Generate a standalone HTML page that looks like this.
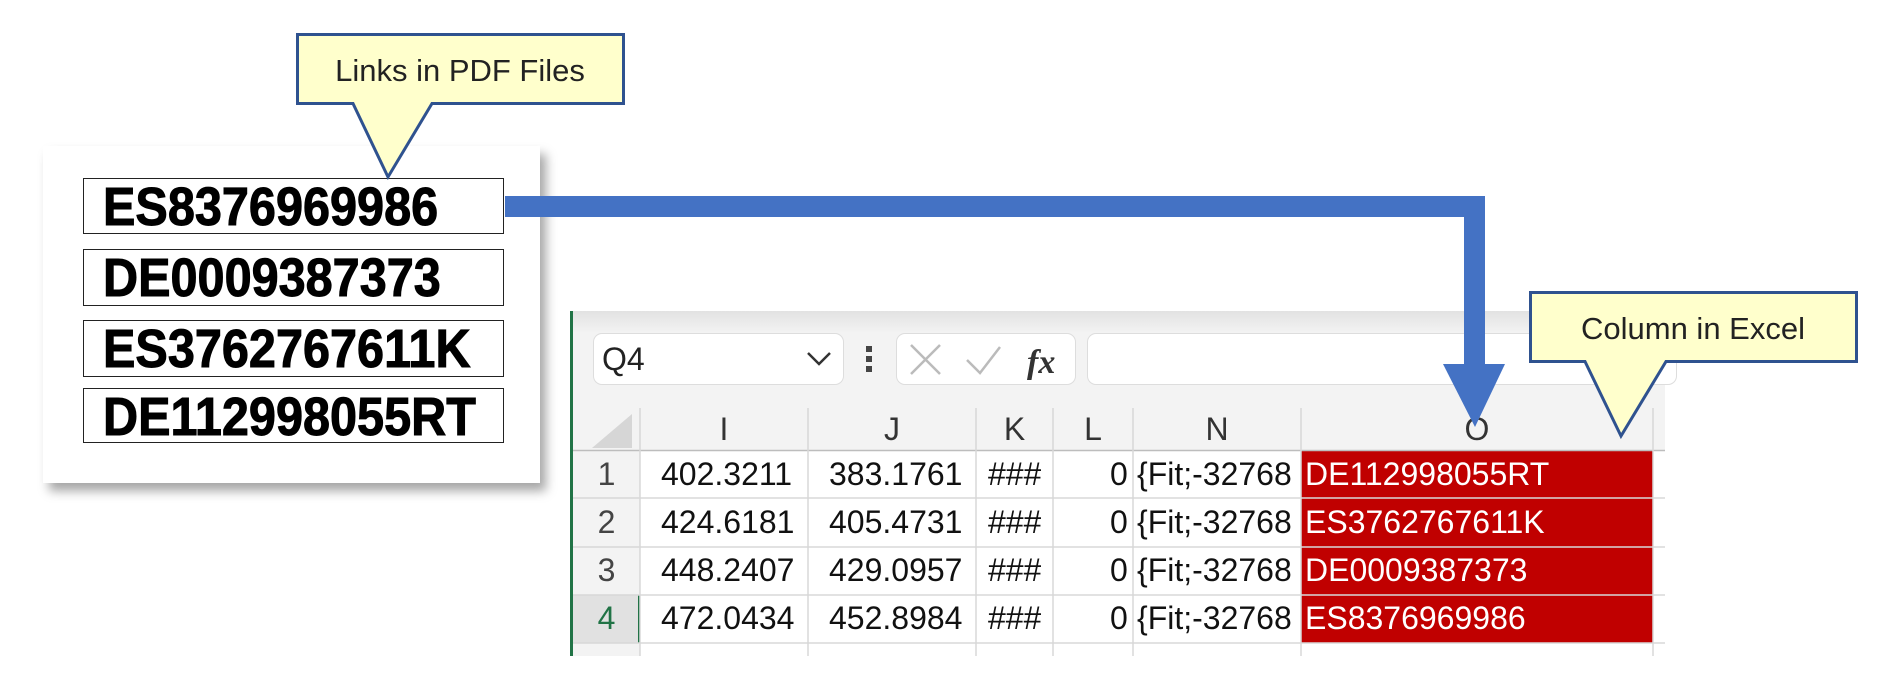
<!DOCTYPE html>
<html><head><meta charset="utf-8"><style>
*{margin:0;padding:0;box-sizing:border-box}
body{width:1895px;height:695px;background:#fff;position:relative;overflow:hidden;font-family:"Liberation Sans",sans-serif}
.abs{position:absolute}
.panel{left:43px;top:146px;width:497px;height:337px;background:#fff;box-shadow:6px 8px 10px rgba(0,0,0,.35)}
.pb{position:absolute;left:83px;width:421px;border:1.5px solid #222;background:#fff;color:#000;overflow:hidden}
.pb span{position:absolute;left:19px;top:1px;font-weight:bold;font-size:54px;line-height:54px;transform:scaleX(0.9);transform-origin:0 0;white-space:nowrap;-webkit-text-stroke:1px #000}
.cell{position:absolute;font-size:32px;color:#111;line-height:47px;white-space:nowrap;overflow:hidden}
</style></head><body>
<div class="abs panel"></div>
<div class="pb" style="top:178px;height:56px"><span>ES8376969986</span></div>
<div class="pb" style="top:249px;height:57px"><span>DE0009387373</span></div>
<div class="pb" style="top:320px;height:57px"><span>ES3762767611K</span></div>
<div class="pb" style="top:388px;height:55px"><span>DE112998055RT</span></div>

<div class="abs" style="left:570px;top:311px;width:1095px;height:345px;background:#f3f3f3;border-left:3px solid #217346">
 <div class="abs" style="left:0;top:0;width:1092px;height:22px;background:linear-gradient(#e2e2e2,#f3f3f3)"></div>
</div>
<div class="abs" style="left:593px;top:333px;width:251px;height:52px;background:#fff;border:1px solid #ddd;border-radius:9px;font-size:32px;line-height:50px;padding-left:8px;color:#222">Q4</div>
<svg class="abs" style="left:805px;top:349px" width="30" height="20"><path d="M3 4 L14 15 L25 4" fill="none" stroke="#333" stroke-width="2.5"/></svg>
<div class="abs" style="left:866px;top:346px;width:6px;height:6px;background:#444"></div>
<div class="abs" style="left:866px;top:356px;width:6px;height:6px;background:#444"></div>
<div class="abs" style="left:866px;top:366px;width:6px;height:6px;background:#444"></div>
<div class="abs" style="left:896px;top:333px;width:180px;height:52px;background:#fff;border:1px solid #ddd;border-radius:9px"></div>
<svg class="abs" style="left:896px;top:333px" width="180" height="52"><path d="M15 12 L44 41 M44 12 L15 41" stroke="#bbb" stroke-width="2.5"/><path d="M71 27 L84 40 L104 14" fill="none" stroke="#bbb" stroke-width="2.5"/>
<text x="131" y="40" font-family="Liberation Serif,serif" font-style="italic" font-weight="bold" font-size="34" fill="#333">fx</text></svg>
<div class="abs" style="left:1087px;top:333px;width:590px;height:52px;background:#fff;border:1px solid #ddd;border-radius:9px"></div>

<div class="abs" style="left:573px;top:408px;width:67px;height:248px;background:#f3f3f3"></div>
<svg class="abs" style="left:580px;top:412px" width="56" height="40"><polygon points="52,2 52,36 12,36" fill="#d6d6d6"/></svg>
<div class="abs" style="left:640px;top:451px;width:1025px;height:205px;background:#fff"></div>
<div class="abs" style="left:1301px;top:451px;width:352px;height:192px;background:#c00000"></div>
<div class="abs" style="left:573px;top:595px;width:67px;height:48px;background:#e1e1e1;border-right:2px solid #217346"></div>
<svg class="abs" style="left:573px;top:408px" width="1092" height="248">
<g stroke="#d8d8d8" stroke-width="1.5">
<line x1="0" y1="42.5" x2="1092" y2="42.5" stroke="#bdbdbd"/>
<line x1="0" y1="90" x2="1092" y2="90"/><line x1="0" y1="139" x2="1092" y2="139"/><line x1="0" y1="187" x2="1092" y2="187"/><line x1="0" y1="235" x2="1092" y2="235"/>
<line x1="67" y1="0" x2="67" y2="248"/><line x1="235" y1="0" x2="235" y2="248"/><line x1="403" y1="0" x2="403" y2="248"/><line x1="480" y1="0" x2="480" y2="248"/><line x1="560" y1="0" x2="560" y2="248"/><line x1="728" y1="0" x2="728" y2="248"/><line x1="1080" y1="0" x2="1080" y2="248"/>
</g></svg>
<div class="cell" style="left:640px;top:406px;width:168px;text-align:center;color:#333">I</div>
<div class="cell" style="left:808px;top:406px;width:168px;text-align:center;color:#333">J</div>
<div class="cell" style="left:976px;top:406px;width:77px;text-align:center;color:#333">K</div>
<div class="cell" style="left:1053px;top:406px;width:80px;text-align:center;color:#333">L</div>
<div class="cell" style="left:1133px;top:406px;width:168px;text-align:center;color:#333">N</div>
<div class="cell" style="left:1301px;top:406px;width:352px;text-align:center;color:#333">O</div>

<div class="cell" style="left:573px;top:451px;width:67px;text-align:center;color:#444">1</div>
<div class="cell" style="left:573px;top:499px;width:67px;text-align:center;color:#444">2</div>
<div class="cell" style="left:573px;top:547px;width:67px;text-align:center;color:#444">3</div>
<div class="cell" style="left:573px;top:595px;width:67px;text-align:center;color:#217346">4</div>

<div class="cell" style="left:661px;top:451px">402.3211</div><div class="cell" style="left:829px;top:451px">383.1761</div><div class="cell" style="left:988px;top:451px">###</div><div class="cell" style="left:1110px;top:451px">0</div><div class="cell" style="left:1137px;top:451px;width:164px">{Fit;-32768</div><div class="cell" style="left:1305px;top:451px;color:#fff">DE112998055RT</div>
<div class="cell" style="left:661px;top:499px">424.6181</div><div class="cell" style="left:829px;top:499px">405.4731</div><div class="cell" style="left:988px;top:499px">###</div><div class="cell" style="left:1110px;top:499px">0</div><div class="cell" style="left:1137px;top:499px;width:164px">{Fit;-32768</div><div class="cell" style="left:1305px;top:499px;color:#fff">ES3762767611K</div>
<div class="cell" style="left:661px;top:547px">448.2407</div><div class="cell" style="left:829px;top:547px">429.0957</div><div class="cell" style="left:988px;top:547px">###</div><div class="cell" style="left:1110px;top:547px">0</div><div class="cell" style="left:1137px;top:547px;width:164px">{Fit;-32768</div><div class="cell" style="left:1305px;top:547px;color:#fff">DE0009387373</div>
<div class="cell" style="left:661px;top:595px">472.0434</div><div class="cell" style="left:829px;top:595px">452.8984</div><div class="cell" style="left:988px;top:595px">###</div><div class="cell" style="left:1110px;top:595px">0</div><div class="cell" style="left:1137px;top:595px;width:164px">{Fit;-32768</div><div class="cell" style="left:1305px;top:595px;color:#fff">ES8376969986</div>

<svg class="abs" style="left:0;top:0" width="1895" height="695">
<rect x="505" y="196" width="980" height="21" fill="#4472c4"/>
<rect x="1464" y="196" width="21" height="170" fill="#4472c4"/>
<polygon points="1443,364 1505,364 1475,427" fill="#4472c4"/>
<path d="M297.5 34.5 H623.5 V103.5 H432 L388 177 L353 103.5 H297.5 Z" fill="#ffffcc" stroke="#2f528f" stroke-width="3"/>
<text x="460" y="81" text-anchor="middle" font-family="Liberation Sans,sans-serif" font-size="31" fill="#222">Links in PDF Files</text>
<path d="M1530.5 292.5 H1856.5 V361.5 H1666 L1621 436 L1585 361.5 H1530.5 Z" fill="#ffffcc" stroke="#2f528f" stroke-width="3"/>
<text x="1693" y="339" text-anchor="middle" font-family="Liberation Sans,sans-serif" font-size="31" fill="#222">Column in Excel</text>
</svg>
</body></html>
